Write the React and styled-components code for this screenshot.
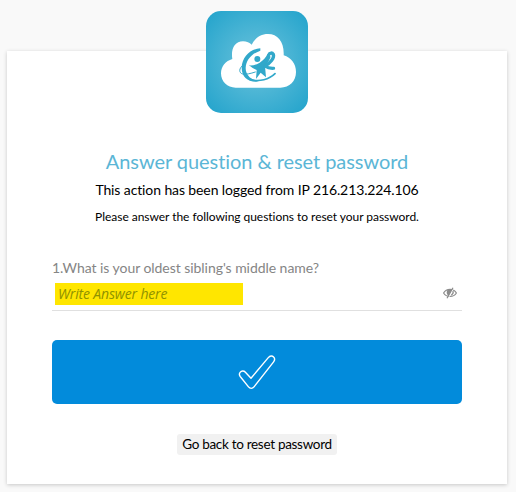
import { useState } from 'react'
import styled, { createGlobalStyle } from 'styled-components'

const GlobalStyle = createGlobalStyle`
  * {
    box-sizing: border-box;
  }
  body {
    margin: 0;
    background: #f9f9f9;
    font-family: Lato, 'Open Sans', sans-serif;
    font-variant-ligatures: none;
    color: #000;
  }
`

const CloudLogo = () => (
  <svg width='102' height='102' viewBox='18 18 306 306'>
    <defs>
      <radialGradient id='sky' cx='50%' cy='50%' r='68%'>
        <stop offset='0' stopColor='#6cc3dc' />
        <stop offset='1' stopColor='#24a4cc' />
      </radialGradient>
    </defs>
    <rect x='18' y='18' width='306' height='306' rx='45' fill='url(#sky)' />
    <path
      fill='#fff'
      d='M107 248C82 248 63 230 63 205C63 184 77 168 97 162C92 133 104 109 129 109C140 109 149 113 155 119C164 100 182 87 204 87C234 87 253 111 251 151C274 158 288 177 288 201C288 228 269 248 241 248Z'
    />
    <g fill='#31a8ca'>
      <path d='M181 130C151 131 126 156 125 188C125 217 145 232 177 230C150 223 137 209 137 189C138 165 155 146 181 137Z' />
      <circle cx='172' cy='162' r='9' />
      <path d='M147 181C160 182 169 179 179 173C190 166 198 157 202 148L212 155C207 168 201 177 195 184L198 217L182 203L168 222L170 195L158 189Z' />
    </g>
    <g fill='none' stroke='#31a8ca' strokeLinecap='round'>
      <path strokeWidth='10' d='M206 150C209 142 217 143 220 148C224 159 210 175 195 183' />
      <path strokeWidth='9' d='M195 184Q206 191 221 190' />
      <path strokeWidth='3' d='M130 180C116 189 116 204 128 207C138 209 151 206 166 201' />
      <path strokeWidth='5' d='M150 223C178 232 208 223 225 206' />
    </g>
  </svg>
)

const EyeSlash = () => (
  <svg width='14' height='12' viewBox='0 0 14 12' fill='none' stroke='#8b8b8b'>
    <path strokeWidth='1.2' d='M.6 6C3.5 1.2 10.5 1.2 13.4 6C10.5 10.6 3.5 10.6 .6 6Z' />
    <path fill='#8b8b8b' stroke='none' d='M4 3.5Q6 1.8 9 2.6L5.5 8.7Q2.9 7 4 3.5Z' />
    <path stroke='#fff' d='M10.9 1L5.2 11' />
    <path strokeWidth='1.2' d='M10 .7L4 11.2M9.9 4.1Q11 6.6 8.2 8.2' />
  </svg>
)

const CheckMark = () => (
  <svg width='38' height='36' viewBox='0 0 38 36' fill='none' stroke='#fff'>
    <path
      strokeWidth='1.4'
      strokeLinejoin='round'
      d='M2.1 18.4C3.5 16.6 5.8 16.5 7.4 18.2L13 24.2L30.3 3.6C32 1.7 34.2 1.6 35.6 3C37 4.4 36.8 6.2 35.6 7.8L16 32.9C14.5 34.8 12 34.8 10.5 32.9L2.2 22.5C1.1 21 1.1 19.7 2.1 18.4Z'
    />
  </svg>
)

export default function App() {
  const [answer, setAnswer] = useState('')
  const [hidden, setHidden] = useState(false)

  return (
    <>
      <GlobalStyle />
      <SPage>
        <SCard>
          <SLogo>
            <CloudLogo />
          </SLogo>
          <STitle>Answer question &amp; reset password</STitle>
          <SNotice>This action has been logged from IP 216.213.224.106</SNotice>
          <SHint>Please answer the following questions to reset your password.</SHint>

          <SForm onSubmit={(e) => e.preventDefault()}>
            <SLabel htmlFor='answer'>1.What is your oldest sibling's middle name?</SLabel>
            <SField>
              <SInput
                id='answer'
                type={hidden ? 'password' : 'text'}
                placeholder='Write Answer here'
                autoComplete='off'
                value={answer}
                onChange={(e) => setAnswer(e.target.value)}
              />
              <SToggle
                type='button'
                aria-label='Toggle visibility'
                onClick={() => setHidden(!hidden)}
              >
                <EyeSlash />
              </SToggle>
            </SField>
            <SSubmit aria-label='Submit'>
              <CheckMark />
            </SSubmit>
          </SForm>

          <SBack href='#'>Go back to reset password</SBack>
        </SCard>
      </SPage>
    </>
  )
}

const SPage = styled.main`
  height: 492px;
  padding: 51px 9px 8px 7px;
`

const SCard = styled.section`
  display: flex;
  flex-direction: column;
  align-items: center;
  height: 433px;
  padding: 0 45px;
  background: #fff;
  box-shadow: 0 1px 4px rgba(0, 0, 0, 0.2);
`

const SLogo = styled.div`
  height: 102px;
  margin-top: -40px;
  svg {
    display: block;
  }
`

const STitle = styled.h1`
  margin: 35px 0 0;
  color: #5bb6d6;
  font-size: 20px;
  font-weight: 400;
  line-height: 26px;
  letter-spacing: -0.06px;
  white-space: nowrap;
`

const SNotice = styled.p`
  margin: 6px 0 0;
  font-size: 14px;
  line-height: 20px;
  letter-spacing: -0.11px;
  white-space: nowrap;
`

const SHint = styled.p`
  margin: 8px 0 0;
  font-size: 12px;
  line-height: 18px;
  letter-spacing: -0.04px;
  white-space: nowrap;
`

const SForm = styled.form`
  width: 410px;
  margin-top: 32px;
`

const SLabel = styled.label`
  display: block;
  color: #858585;
  font-size: 14px;
  line-height: 20px;
  letter-spacing: -0.05px;
`

const SField = styled.div`
  display: flex;
  justify-content: space-between;
  height: 33px;
  padding: 5px 5px 0 3px;
  border-bottom: 1px solid #e0e0e0;
`

const SInput = styled.input`
  width: 188px;
  height: 22px;
  padding: 0 3px 2px;
  border: 0;
  outline: none;
  background: #ffe600;
  color: #858500;
  font: italic 14px 'Open Sans', sans-serif;
  letter-spacing: -0.15px;
  &::placeholder {
    color: #8f9200;
    opacity: 1;
  }
`

const SToggle = styled.button`
  height: 12px;
  margin-top: 4px;
  padding: 0;
  border: 0;
  background: none;
  cursor: pointer;
  svg {
    display: block;
  }
`

const SSubmit = styled.button`
  display: flex;
  align-items: center;
  justify-content: center;
  width: 100%;
  height: 64px;
  margin-top: 29px;
  border: 0;
  border-radius: 5px;
  background: #028bdb;
  cursor: pointer;
`

const SBack = styled.a`
  height: 21px;
  margin-top: 30px;
  padding: 0 5px;
  border-radius: 3px;
  background: #f1f1f1;
  color: #000;
  font-size: 13.5px;
  line-height: 20px;
  letter-spacing: -0.3px;
  text-decoration: none;
  white-space: nowrap;
`
